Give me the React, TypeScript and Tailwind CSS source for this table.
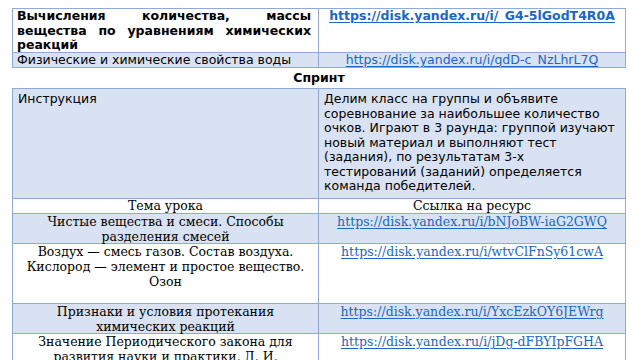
const LINE = "border-[#8eaadb]";
const FILL = "bg-[#d9e2f3]";
const SANS = "font-['DejaVu_Sans',sans-serif]";
const SERIF = "font-['DejaVu_Serif',serif]";
const LINK = "text-[#1a66c9] underline underline-offset-2";

const rows = [
  {
    topic: ["Чистые вещества и смеси. Способы", "разделения смесей"],
    url: "https://disk.yandex.ru/i/bNJoBW-iaG2GWQ",
    h: "h-[30px]",
    fill: true,
  },
  {
    topic: ["Воздух — смесь газов. Состав воздуха.", "Кислород — элемент и простое вещество.", "Озон"],
    url: "https://disk.yandex.ru/i/wtvClFnSy61cwA",
    h: "h-[60px]",
    fill: false,
  },
  {
    topic: ["Признаки и условия протекания", "химических реакций"],
    url: "https://disk.yandex.ru/i/YxcEzkOY6JEWrg",
    h: "h-[30px]",
    fill: true,
  },
  {
    topic: ["Значение Периодического закона для", "развития науки и практики. Д. И."],
    url: "https://disk.yandex.ru/i/jDg-dFBYIpFGHA",
    h: "h-[45px]",
    fill: false,
  },
];

const instruction = [
  "Делим класс на группы и объявите",
  "соревнование за наибольшее количество",
  "очков. Играют в 3 раунда: группой изучают",
  "новый материал и выполняют тест",
  "(задания), по результатам 3-х",
  "тестирований (заданий) определяется",
  "команда победителей.",
];

const Justified = ({ children }: { children: string }) => (
  <span className="block text-justify [text-align-last:justify]">{children}</span>
);

export default function App() {
  return (
    <div className={`h-[360px] w-[640px] overflow-hidden bg-white pl-3 pt-2 text-[12.5px] text-black ${SANS}`}>
      {/* top table */}
      <div className={`grid w-[614px] grid-cols-[306px_307px] border-l border-t ${LINE}`}>
        <div className={`h-[44px] border-b border-r ${LINE} pl-[4px] pr-[7px] font-bold leading-[14.5px]`}>
          <Justified>Вычисления количества, массы</Justified>
          <Justified>вещества по уравнениям химических</Justified>
          <span className="block">реакций</span>
        </div>
        <div className={`h-[44px] border-b border-r ${LINE} text-center font-bold leading-[14.5px]`}>
          <a className={LINK}>https://disk.yandex.ru/i/_G4-5lGodT4R0A</a>
        </div>
        <div className={`h-[15px] border-b border-r ${LINE} ${FILL} pl-[4px] leading-[14px]`}>
          Физические и химические свойства воды
        </div>
        <div className={`h-[15px] border-b border-r ${LINE} ${FILL} text-center leading-[14px]`}>
          <a className={LINK}>https://disk.yandex.ru/i/gdD-c_NzLhrL7Q</a>
        </div>
      </div>

      <div className="h-[20px] w-[614px] text-center font-bold leading-[20px]">Спринт</div>

      {/* sprint table */}
      <div className={`grid w-[614px] grid-cols-[306px_307px] border-l border-t ${LINE}`}>
        <div className={`h-[110px] border-b border-r ${LINE} ${FILL} pl-[5px] pt-[3px] leading-[14.5px]`}>
          Инструкция
        </div>
        <div className={`h-[110px] border-b border-r ${LINE} ${FILL} pl-[5px] pt-[3px] leading-[14.5px]`}>
          {instruction.map((l) => (
            <span key={l} className="block whitespace-nowrap">
              {l}
            </span>
          ))}
        </div>

        <div className={`h-[15px] border-b border-r ${LINE} text-center leading-[14px] ${SERIF}`}>Тема урока</div>
        <div className={`h-[15px] border-b border-r ${LINE} text-center leading-[14px] ${SERIF}`}>
          Ссылка на ресурс
        </div>

        {rows.map((r) => (
          <div key={r.url} className="contents">
            <div
              className={`${r.h} border-b border-r ${LINE} ${r.fill ? FILL : "bg-white"} text-center leading-[15px] ${SERIF}`}
            >
              {r.topic.map((l) => (
                <span key={l} className="block whitespace-nowrap">
                  {l}
                </span>
              ))}
            </div>
            <div
              className={`${r.h} border-b border-r ${LINE} ${r.fill ? FILL : "bg-white"} text-center leading-[15px] ${SERIF}`}
            >
              <a className={LINK}>{r.url}</a>
            </div>
          </div>
        ))}
      </div>
    </div>
  );
}
